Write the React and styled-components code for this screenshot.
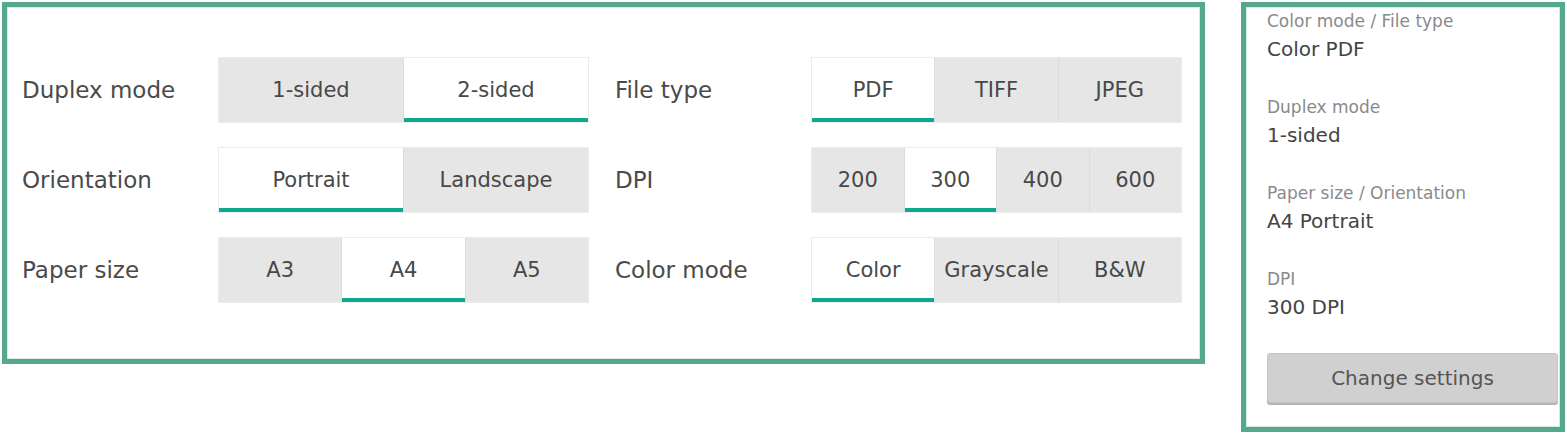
import React from "react";
import styled, { createGlobalStyle } from "styled-components";

const GlobalStyle = createGlobalStyle`
  html, body {
    margin: 0;
    padding: 0;
    background: #ffffff;
  }
  body {
    font-family: 'DejaVu Sans', 'Liberation Sans', sans-serif;
    color: #444444;
  }
`;

const fields = [
  { label: "Duplex mode", options: ["1-sided", "2-sided"], selected: "2-sided" },
  { label: "File type", options: ["PDF", "TIFF", "JPEG"], selected: "PDF" },
  { label: "Orientation", options: ["Portrait", "Landscape"], selected: "Portrait" },
  { label: "DPI", options: ["200", "300", "400", "600"], selected: "300" },
  { label: "Paper size", options: ["A3", "A4", "A5"], selected: "A4" },
  { label: "Color mode", options: ["Color", "Grayscale", "B&W"], selected: "Color" },
];

const summary = [
  { label: "Color mode / File type", value: "Color PDF" },
  { label: "Duplex mode", value: "1-sided" },
  { label: "Paper size / Orientation", value: "A4 Portrait" },
  { label: "DPI", value: "300 DPI" },
];

const App = () => {
  return (
    <Page>
      <GlobalStyle />
      <SettingsPanel>
        <FieldGrid>
          {fields.map((f) => (
            <Field key={f.label}>
              <Label>{f.label}</Label>
              <Segmented>
                {f.options.map((o) => (
                  <Segment key={o} $active={o === f.selected}>
                    {o}
                  </Segment>
                ))}
              </Segmented>
            </Field>
          ))}
        </FieldGrid>
      </SettingsPanel>
      <SummaryPanel>
        <SummaryList>
          {summary.map((s) => (
            <SummaryItem key={s.label}>
              <SummaryLabel>{s.label}</SummaryLabel>
              <SummaryValue>{s.value}</SummaryValue>
            </SummaryItem>
          ))}
        </SummaryList>
        <ChangeButton>Change settings</ChangeButton>
      </SummaryPanel>
    </Page>
  );
};

const Page = styled.div`
  display: flex;
  align-items: flex-start;
  gap: 36px;
  padding: 2px 0 0 2px;
`;

const SettingsPanel = styled.div`
  box-sizing: border-box;
  width: 1203px;
  height: 362px;
  border: 5px solid #55a889;
  box-shadow: inset 0 0 0 1px #d3ebe0;
  padding: 50px 0 0 15px;
`;

const FieldGrid = styled.div`
  display: grid;
  grid-template-columns: 567px 567px;
  column-gap: 26px;
  row-gap: 24px;
`;

const Field = styled.div`
  display: flex;
  align-items: center;
  height: 66px;
`;

const Label = styled.div`
  width: 196px;
  font-size: 23px;
  color: #4a4a4a;
`;

const Segmented = styled.div`
  box-sizing: border-box;
  display: flex;
  width: 371px;
  height: 66px;
  border: 1px solid #ebebeb;
`;

const Segment = styled.div`
  flex: 1;
  display: flex;
  align-items: center;
  justify-content: center;
  font-size: 21px;
  color: #484848;
  background: ${(p) => (p.$active ? "#ffffff" : "#e6e6e6")};
  box-shadow: ${(p) => (p.$active ? "inset 0 -4px 0 #0fa88c" : "none")};
  & + & {
    border-left: 1px solid #dcdcdc;
  }
`;

const SummaryPanel = styled.div`
  box-sizing: border-box;
  display: flex;
  flex-direction: column;
  width: 324px;
  height: 430px;
  border: 5px solid #55a889;
  box-shadow: inset 0 0 0 1px #d3ebe0;
  padding: 4px 2px 0 21px;
`;

const SummaryList = styled.div`
  display: flex;
  flex-direction: column;
  gap: 36px;
`;

const SummaryItem = styled.div`
  display: flex;
  flex-direction: column;
  gap: 6px;
`;

const SummaryLabel = styled.div`
  font-size: 17px;
  line-height: 20px;
  color: #8a8a8a;
`;

const SummaryValue = styled.div`
  font-size: 20px;
  line-height: 24px;
  color: #444444;
`;

const ChangeButton = styled.button`
  box-sizing: border-box;
  margin-top: 34px;
  width: 291px;
  height: 50px;
  border: 1px solid #c6c6c6;
  border-radius: 3px;
  background: #d0d0d0;
  box-shadow: 0 2px 0 #b4b4b4;
  font-family: 'DejaVu Sans', 'Liberation Sans', sans-serif;
  font-size: 20px;
  color: #555555;
  cursor: pointer;
`;

export default App;
